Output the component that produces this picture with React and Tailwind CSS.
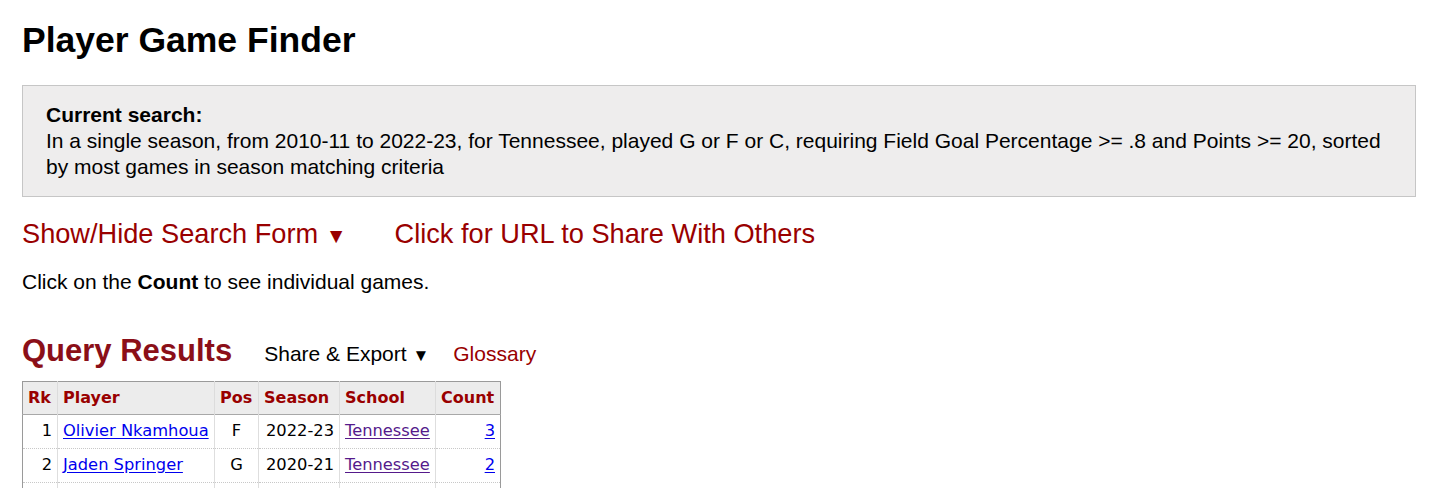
import React from 'react';

const rows = [
  { rk: 1, player: 'Olivier Nkamhoua', pos: 'F', season: '2022-23', school: 'Tennessee', count: 3 },
  { rk: 2, player: 'Jaden Springer', pos: 'G', season: '2020-21', school: 'Tennessee', count: 2 },
];

const App = () => {
  return (
    <div className="bg-white min-h-screen pl-[22px] pr-[40px] pt-[20px] font-['Liberation_Sans',Arial,sans-serif] text-black">
      <h1 className="text-[35.5px] leading-[40px] font-bold">Player Game Finder</h1>

      {/* Current search box */}
      <div className="mt-[25px] border border-[#c6c6c6] bg-[#eeeded] px-[23px] py-[16px] text-[21px] leading-[26px]">
        <div className="font-bold">Current search:</div>
        <div>
          In a single season, from 2010-11 to 2022-23, for Tennessee, played G or F or C, requiring Field Goal
          Percentage &gt;= .8 and Points &gt;= 20, sorted by most games in season matching criteria
        </div>
      </div>

      <div className="mt-[21px] flex items-baseline gap-[48px] text-[27.2px] leading-[32px] text-[#990000]">
        <span>
          Show/Hide Search Form <span className="text-[21px]">▼</span>
        </span>
        <span>Click for URL to Share With Others</span>
      </div>

      <p className="mt-[17px] text-[21px] leading-[26px]">
        Click on the <strong>Count</strong> to see individual games.
      </p>

      <div className="mt-[38px] flex items-baseline">
        <h2 className="text-[31px] leading-[36px] font-bold text-[#8b0f18]">Query Results</h2>
        <span className="ml-[32px] text-[21px]">
          Share &amp; Export <span className="text-[17px]">▼</span>
        </span>
        <span className="ml-[24px] text-[21px] text-[#990000]">Glossary</span>
      </div>

      <table className="mt-[11px] w-[478px] table-fixed border-collapse border border-[#9a9a9a] font-['DejaVu_Sans',Verdana,sans-serif] text-[16.3px] whitespace-nowrap">
        <thead>
          <tr className="h-[33px] bg-[#ececec] text-[16px] font-bold text-[#990000] border-b border-[#a8a8a8]">
            <th className="w-[35px] px-[5px] text-left border-r border-[#dcdcdc]">Rk</th>
            <th className="w-[157px] px-[5px] text-left border-r border-[#dcdcdc]">Player</th>
            <th className="w-[44px] px-[5px] text-left border-r border-[#dcdcdc]">Pos</th>
            <th className="w-[81px] px-[5px] text-left border-r border-[#dcdcdc]">Season</th>
            <th className="w-[96px] px-[5px] text-left border-r border-[#dcdcdc]">School</th>
            <th className="w-[65px] px-[5px] text-left">Count</th>
          </tr>
        </thead>
        <tbody>
          {rows.map((r) => (
            <tr key={r.rk} className="h-[34px] border-b border-dotted border-[#c8c8c8]">
              <td className="px-[5px] text-right border-r border-[#dedede]">{r.rk}</td>
              <td className="px-[5px] border-r border-[#dedede]">
                <a className="text-[#0000ee] underline underline-offset-2">{r.player}</a>
              </td>
              <td className="px-[5px] text-center border-r border-[#dedede]">{r.pos}</td>
              <td className="px-[5px] text-right border-r border-[#dedede]">{r.season}</td>
              <td className="px-[5px] border-r border-[#dedede]">
                <a className="text-[#551a8b] underline underline-offset-2">{r.school}</a>
              </td>
              <td className="px-[5px] text-right">
                <a className="text-[#0000ee] underline underline-offset-2">{r.count}</a>
              </td>
            </tr>
          ))}
          <tr className="h-[34px]">
            <td className="border-r border-[#dedede]">&nbsp;</td>
            <td className="border-r border-[#dedede]"></td>
            <td className="border-r border-[#dedede]"></td>
            <td className="border-r border-[#dedede]"></td>
            <td className="border-r border-[#dedede]"></td>
            <td></td>
          </tr>
        </tbody>
      </table>
    </div>
  );
};

export default App;
